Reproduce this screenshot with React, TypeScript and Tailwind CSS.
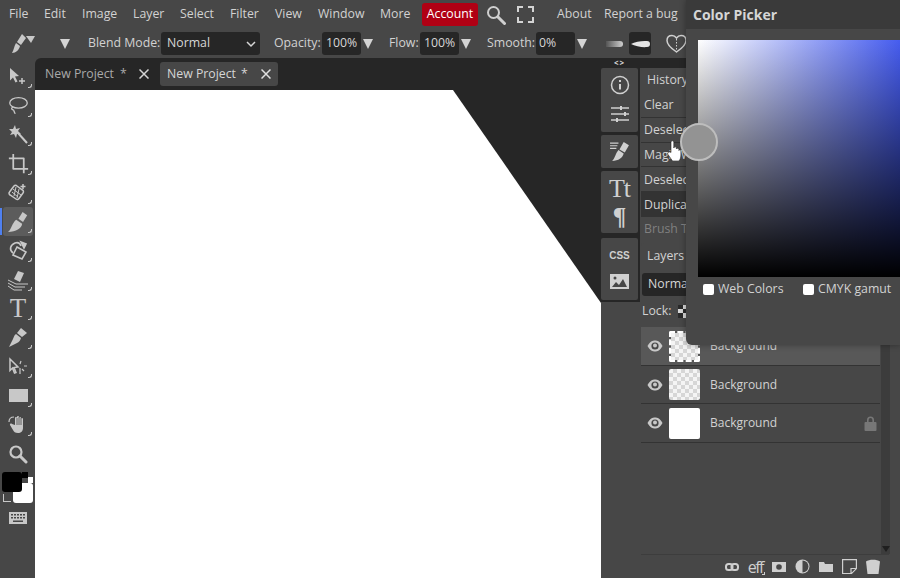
import type { ReactNode } from "react"

const menuLeft = [
  { label: "File", cls: "w-[35px]" },
  { label: "Edit", cls: "w-[38px]" },
  { label: "Image", cls: "w-[51px]" },
  { label: "Layer", cls: "w-[47px]" },
  { label: "Select", cls: "w-[50px]" },
  { label: "Filter", cls: "w-[45px]" },
  { label: "View", cls: "w-[43px]" },
  { label: "Window", cls: "w-[62px]" },
  { label: "More", cls: "w-[42px]" },
]

const historyRows = [
  { label: "Clear", cls: "bg-[#474747] text-[#d2d2d2]" },
  { label: "Deselect", cls: "bg-[#474747] text-[#d2d2d2]" },
  { label: "Magic Wand", cls: "bg-[#474747] text-[#d2d2d2]" },
  { label: "Deselect", cls: "bg-[#474747] text-[#d2d2d2]" },
  { label: "Duplicate", cls: "bg-[#333333] text-[#d2d2d2]" },
  { label: "Brush Tool", cls: "bg-[#474747] text-[#808080]" },
]

function Glyph({ size = 22, children }: { size?: number; children: ReactNode }) {
  return (
    <svg width={size} height={size} viewBox="0 0 24 24" fill="none" stroke="#c8c8c8" strokeWidth="2" strokeLinecap="round" strokeLinejoin="round">
      {children}
    </svg>
  )
}

function BrushIcon({ size = 22 }: { size?: number }) {
  return (
    <svg width={size} height={size} viewBox="0 0 24 24" fill="#c8c8c8">
      <path d="M17 1l5 3.500-4.500 7.500-5-3.500z" />
      <path d="M10 9.500l6.500 4.500C16 19 10 23 1 23c4-3 4.500-10 9-13.500z" />
    </svg>
  )
}

function Checker({ className }: { className: string }) {
  return (
    <div
      className={`${className} bg-[#f4f4f4] bg-[linear-gradient(45deg,#d6d6d6_25%,transparent_25%,transparent_75%,#d6d6d6_75%),linear-gradient(45deg,#d6d6d6_25%,transparent_25%,transparent_75%,#d6d6d6_75%)] bg-[length:8px_8px] bg-[position:0_0,4px_4px]`}
    />
  )
}

function ToolSlot({ active, corner = true, children }: { active?: boolean; corner?: boolean; children: ReactNode }) {
  return (
    <div className={`relative flex h-[29px] w-[30px] shrink-0 items-center justify-center rounded-[3px] ${active ? "bg-[#5c5c5c]" : ""}`}>
      {active && <span className="absolute -left-[3px] top-[1px] h-[27px] w-[2px] bg-[#4f80f0]" />}
      {children}
      {corner && <span className="absolute bottom-[3px] right-[1px] h-[4px] w-[4px] rounded-br-[3px] border-b border-r border-[#c8c8c8]" />}
    </div>
  )
}

function Triangle() {
  return <span className="block h-0 w-0 border-x-[5px] border-t-[10px] border-x-transparent border-t-[#d4d4d4]" />
}

function NumField({ value, cls }: { value: string; cls: string }) {
  return <div className={`flex h-[23px] w-[39px] items-center rounded-[3px] bg-[#262626] text-[#d6d6d6] ${cls}`}>{value}</div>
}

function LayerRow({ selected, lock, white, h }: { selected?: boolean; lock?: boolean; white?: boolean; h: string }) {
  return (
    <div className={`flex w-[239px] items-center border-b border-[#333333] ${h} ${selected ? "bg-[#585858]" : "bg-[#474747]"}`}>
      <div className="flex w-[28px] justify-center">
        <svg width="16" height="12" viewBox="0 0 16 12">
          <path d="M0.500 6C3 1.500 5.500 0.500 8 0.500S13 1.500 15.500 6C13 10.500 10.500 11.500 8 11.500S3 10.500 0.500 6z" fill="#c8c8c8" />
          <circle cx="8" cy="6" r="3.600" fill="#474747" />
          <circle cx="8" cy="5.500" r="2" fill="#c8c8c8" />
        </svg>
      </div>
      {white ? (
        <div className="h-[31px] w-[31px] rounded-[2px] bg-white" />
      ) : selected ? (
        <div className="rounded-[2px] border-2 border-dashed border-white">
          <Checker className="h-[27px] w-[27px]" />
        </div>
      ) : (
        <Checker className="h-[31px] w-[31px] rounded-[2px]" />
      )}
      <span className="ml-[10px] text-[12px] text-[#d2d2d2]">Background</span>
      {lock && (
        <svg className="ml-auto mr-[3px]" width="13" height="15" viewBox="0 0 13 15" fill="#777777">
          <path d="M3 6V4a3.500 3.500 0 017 0v2H8.400V4a1.900 1.900 0 00-3.800 0v2z" />
          <rect x="0.500" y="6" width="12" height="9" rx="1" />
        </svg>
      )}
    </div>
  )
}

export default function App() {
  return (
    <div className="relative flex h-[578px] w-[900px] flex-col overflow-hidden whitespace-nowrap bg-[#474747] font-['Open_Sans',sans-serif] text-[12.3px] text-[#d2d2d2]">
      {/* menu */}
      <div className="flex h-[29px] shrink-0 items-center pl-[9px]">
        {menuLeft.map((item) => (
          <span key={item.label} className={item.cls}>{item.label}</span>
        ))}
        <span className="flex h-[23px] w-[56px] items-center justify-center rounded-[3px] bg-[#b00014] text-white">Account</span>
        <svg className="ml-[8px]" width="20" height="20" viewBox="0 0 20 20" fill="none" stroke="#cfcfcf">
          <circle cx="7.500" cy="7.500" r="5.500" strokeWidth="2" />
          <path d="M12 12l6.500 6.500" strokeWidth="3" strokeLinecap="round" />
        </svg>
        <svg className="ml-[11px]" width="17" height="17" viewBox="0 0 17 17" fill="none" stroke="#d4d4d4" strokeWidth="2">
          <path d="M1 6V1h5M11 1h5v5M16 11v5h-5M6 16H1v-5" />
        </svg>
        <span className="ml-[23px] w-[47px]">About</span>
        <span>Report a bug</span>
      </div>

      {/* options */}
      <div className="flex h-[29px] shrink-0 items-center pl-[12px]">
        <svg width="25" height="21" viewBox="0 0 25 21" fill="#c8c8c8">
          <path d="M10 1l4 4-5 7-4-3z" />
          <path d="M4 10l4 3c-1 4-4 7-8 7 2-3 2-7 4-10z" />
          <path d="M14 3h9l-4 7z" />
        </svg>
        <span className="ml-[23px] mr-[18px] flex"><Triangle /></span>
        <span className="w-[73px]">Blend Mode:</span>
        <div className="flex h-[23px] w-[99px] items-center justify-between rounded-[3px] bg-[#262626] pl-[6px] pr-[3px] text-[#d6d6d6]">
          Normal
          <svg width="12" height="12" viewBox="0 0 12 12" fill="none" stroke="#d6d6d6" strokeWidth="1.500"><path d="M2 4l4 4 4-4" /></svg>
        </div>
        <span className="ml-[14px] w-[48px]">Opacity:</span>
        <NumField value="100%" cls="pl-[4px]" />
        <span className="ml-[2px] mr-[16px] flex"><Triangle /></span>
        <span className="w-[31px]">Flow:</span>
        <NumField value="100%" cls="pl-[4px]" />
        <span className="ml-[2px] mr-[16px] flex"><Triangle /></span>
        <span className="w-[49px]">Smooth:</span>
        <NumField value="0%" cls="pl-[3px]" />
        <span className="ml-[2px] flex"><Triangle /></span>
        <div className="ml-[19px] h-[6px] w-[17px] rounded-r-full bg-[linear-gradient(to_right,#555,#d0d0d0)]" />
        <div className="ml-[6px] flex h-[23px] w-[22px] items-center justify-center rounded-[3px] bg-[#262626]">
          <svg width="20" height="8" viewBox="0 0 20 8" fill="#e4e4e4"><path d="M1 4C5 1.500 13 0.500 17 1a3 3 0 010 6C13 7.500 5 6.500 1 4z" /></svg>
        </div>
        <svg className="ml-[15px]" width="21" height="20" viewBox="0 0 21 20" fill="none" stroke="#d0d0d0" strokeWidth="1.500">
          <path d="M10.500 18C6 15 1 11 1 6.500 1 3 3.500 1.500 6 1.500c2 0 3.500 1.200 4.500 2.500C11.500 2.700 13 1.500 15 1.500c2.500 0 5 1.500 5 5C20 11 15 15 10.500 18z" />
          <path d="M10.500 5v11" strokeWidth="1" strokeDasharray="1.500 1.500" />
        </svg>
      </div>

      {/* work area */}
      <div className="flex min-h-0 flex-1">
        {/* tools */}
        <div className="flex w-[35px] shrink-0 flex-col items-start pt-[4px]">
          <div className="ml-[3px] flex flex-col">
            <ToolSlot>
              <svg width="20" height="20" viewBox="0 0 20 20" fill="#c8c8c8">
                <path d="M2 1l9 8-4 .5 2.500 5-2 1-2.500-5-3 3z" />
                <path d="M14 11v6M11 14h6" stroke="#c8c8c8" strokeWidth="1.500" />
              </svg>
            </ToolSlot>
            <ToolSlot>
              <Glyph size={21}>
                <ellipse cx="12" cy="9" rx="10" ry="6" strokeWidth="1.500" />
                <path d="M5 14c-2 2 0 3 1 3s1 3 2 4" strokeWidth="1.500" />
              </Glyph>
            </ToolSlot>
            <ToolSlot>
              <svg width="21" height="21" viewBox="0 0 21 21" fill="#c8c8c8">
                <path d="M7 1l1 4 4-1-2 3 3 3-4 0-1 4-2-4-4 1 2-3-3-3 4 0z" />
                <path d="M10 9l9 10" stroke="#c8c8c8" strokeWidth="2" />
              </svg>
            </ToolSlot>
            <ToolSlot>
              <Glyph size={21}>
                <path d="M6 1v17h17M1 6h17v17" strokeLinecap="butt" />
              </Glyph>
            </ToolSlot>
            <ToolSlot>
              <svg width="21" height="21" viewBox="0 0 21 21" fill="none" stroke="#c8c8c8" strokeWidth="1.500">
                <path d="M6 4L1.500 10a2 2 0 00.500 3l6 4a2 2 0 003-.500L15 11a2 2 0 00-.500-3L9 4a2 2 0 00-3 0z" />
                <path d="M5 7l8 6M4 10l6 5M8 5l-2 9M11 7l-2 9" strokeWidth="1" />
                <path d="M15 2v5M12.500 4.500h5" />
              </svg>
            </ToolSlot>
            <ToolSlot active>
              <BrushIcon size={22} />
            </ToolSlot>
            <ToolSlot>
              <svg width="21" height="21" viewBox="0 0 21 21" fill="none" stroke="#c8c8c8" strokeWidth="1.600">
                <path d="M9 7l9 5-4 7-9-4z" />
                <path d="M5 13C1 10 2 5 7 3c3-1 5 0 6 3" />
                <path d="M13 2l5 2-2 4z" fill="#c8c8c8" />
              </svg>
            </ToolSlot>
            <ToolSlot>
              <svg width="22" height="22" viewBox="0 0 22 22" fill="#c8c8c8">
                <path d="M11 2l6 2-4 9-6-3z" />
                <path d="M1 11l8 4h12M1 14l7 4h10M1 17l6 4h8" stroke="#c8c8c8" strokeWidth="1" fill="none" />
              </svg>
            </ToolSlot>
            <ToolSlot>
              <span className="font-['Liberation_Serif',serif] text-[27px] leading-none text-[#c8c8c8]">T</span>
            </ToolSlot>
            <ToolSlot>
              <svg width="20" height="21" viewBox="0 0 20 21" fill="#c8c8c8">
                <path d="M13 1l6 5-5 4-5-4z" />
                <path d="M8 7l5 4c-1 3-2 4-4 5l-8 4 4-8c1-2 1-4 3-5z" />
              </svg>
            </ToolSlot>
            <ToolSlot>
              <svg width="20" height="20" viewBox="0 0 20 20" fill="none" stroke="#c8c8c8" strokeWidth="1.500">
                <path d="M2 2l8 8-4 .5 2 5-1.500.5-2-5-2.500 2.500z" />
                <path d="M13 4l-1 3M16 9h3M14 12l2 2M12 11v6" strokeWidth="1.200" />
              </svg>
            </ToolSlot>
            <ToolSlot>
              <div className="h-[13px] w-[19px] bg-[#c8c8c8]" />
            </ToolSlot>
            <ToolSlot>
              <svg width="21" height="21" viewBox="0 0 21 21" fill="#c8c8c8">
                <path d="M7 11V4a1 1 0 012 0V3a1 1 0 012 0v1a1 1 0 012 0v1a1 1 0 012 0v9c0 3-2 5-5 5s-4-1-5-3l-3-5c-.500-1 1-2 2-1z" />
                <path d="M9 4v7M11 3v8M13 4v7" fill="none" stroke="#474747" strokeWidth="0.800" />
                <path d="M1 8c0-3 2-5 5-5" fill="none" stroke="#c8c8c8" strokeWidth="1.200" />
              </svg>
            </ToolSlot>
            <ToolSlot corner={false}>
              <svg width="20" height="20" viewBox="0 0 20 20" fill="none" stroke="#c8c8c8">
                <circle cx="8" cy="8" r="5.500" strokeWidth="2.200" />
                <path d="M12 12l6 6" strokeWidth="3" strokeLinecap="round" />
              </svg>
            </ToolSlot>
          </div>
          <div className="relative ml-[2px] mt-[4px] h-[36px] w-[31px] shrink-0">
            <div className="absolute left-[11px] top-[11px] h-[20px] w-[20px] rounded-[3px] bg-white" />
            <div className="absolute left-0 top-0 h-[20px] w-[20px] rounded-[3px] bg-black" />
            <div className="absolute left-[20px] top-0 h-[6px] w-[6px] bg-black" />
            <div className="absolute left-[26px] top-[5px] h-[6px] w-[5px] bg-white" />
            <span className="absolute left-[1px] top-[22px] h-[8px] w-[8px] border-b border-l border-[#c8c8c8]" />
          </div>
          <svg className="ml-[9px] mt-[4px]" width="18" height="12" viewBox="0 0 18 12" fill="#c8c8c8">
            <path fillRule="evenodd" d="M0 0h18v12H0zM2 2v1.500h2V2zm3 0v1.500h2V2zm3 0v1.500h2V2zm3 0v1.500h2V2zm3 0v1.500h2V2zM2 5v1.500h2V5zm3 0v1.500h2V5zm3 0v1.500h2V5zm3 0v1.500h2V5zm3 0v1.500h2V5zM4 8.500V10h10V8.500z" />
          </svg>
        </div>

        {/* canvas */}
        <div className="flex w-[566px] shrink-0 flex-col rounded-tl-[6px] bg-[#262626]">
          <div className="flex h-[32px] shrink-0 items-center pl-[10px]">
            <div className="flex h-[24px] w-[115px] items-center text-[#a9a9a9]">
              <span className="w-[75px]">New Project</span>
              <span>*</span>
              <svg className="ml-[12px]" width="10" height="10" viewBox="0 0 10 10" stroke="#d4d4d4" strokeWidth="1.500"><path d="M0.500 0.500l9 9M9.500 0.500l-9 9" /></svg>
            </div>
            <div className="flex h-[24px] w-[118px] items-center rounded-[3px] bg-[#474747] pl-[7px] text-[#d6d6d6]">
              <span className="w-[74px]">New Project</span>
              <span>*</span>
              <svg className="ml-[13px]" width="10" height="10" viewBox="0 0 10 10" stroke="#e0e0e0" strokeWidth="1.500"><path d="M0.500 0.500l9 9M9.500 0.500l-9 9" /></svg>
            </div>
          </div>
          <div className="min-h-0 flex-1 bg-white [clip-path:polygon(0_0,418px_0,566px_213px,566px_100%,0_100%)]" />
        </div>

        {/* right side */}
        <div className="flex min-w-0 flex-1 flex-col">
          <div className="flex h-[10px] shrink-0 items-center bg-[#262626] pl-[13px] text-[8px] font-bold leading-none tracking-[1px] text-[#d6d6d6]">&lt;&gt;</div>
          <div className="flex min-h-0 flex-1">
            {/* dock */}
            <div className="flex w-[39px] shrink-0 flex-col">
              <div className="flex h-[234px] flex-col bg-[#262626] pr-[2px]">
                <div className="flex h-[64px] flex-col items-center gap-[11px] rounded-[2px] bg-[#474747] pt-[7px]">
                  <svg width="20" height="20" viewBox="0 0 20 20" fill="none" stroke="#d0d0d0" strokeWidth="1.500">
                    <circle cx="10" cy="10" r="8.500" />
                    <path d="M10 9v5.500M10 5v2" strokeWidth="2" />
                  </svg>
                  <svg width="20" height="16" viewBox="0 0 20 16" stroke="#d0d0d0" strokeWidth="1.500">
                    <path d="M1 2h18M1 8h18M1 14h18" />
                    <path d="M11 0v4M15 6v4M7 12v4" strokeWidth="2" />
                  </svg>
                </div>
                <div className="mt-[3px] flex h-[33px] items-center justify-center rounded-[2px] bg-[#474747]">
                  <svg width="21" height="21" viewBox="0 0 20 20" fill="#d0d0d0">
                    <path d="M14 1l5 3-4 7-5-3z" />
                    <path d="M9 8.500l5 3.500c-1 4-5 7-11 7 3-3 3-7 6-10.500z" />
                    <path d="M1 2h8M1 4.500h7M1 7h6" stroke="#d0d0d0" strokeWidth="1" />
                  </svg>
                </div>
                <div className="mt-[3px] flex h-[62px] flex-col items-center justify-center rounded-[2px] bg-[#474747] font-['Liberation_Serif',serif] leading-none text-[#d0d0d0]">
                  <span className="text-[26px] tracking-[-1px]">Tt</span>
                  <span className="mt-[2px] text-[25px] font-bold">¶</span>
                </div>
                <div className="mt-[5px] flex h-[62px] flex-col items-center justify-center gap-[13px] rounded-[2px] bg-[#474747] pt-[2px]">
                  <span className="font-['Liberation_Sans',sans-serif] text-[10px] font-bold leading-none text-[#d0d0d0]">CSS</span>
                  <svg width="19" height="15" viewBox="0 0 19 15">
                    <rect width="19" height="15" fill="#d0d0d0" />
                    <path d="M2 13l4-5 3 3 4-6 4 8z" fill="#474747" />
                    <circle cx="5" cy="4" r="1.500" fill="#474747" />
                  </svg>
                </div>
              </div>
            </div>

            {/* panels */}
            <div className="flex min-w-0 flex-1 flex-col pl-px">
              <div className="flex h-[24px] shrink-0 items-center rounded-t-[3px] bg-[#474747] pl-[6px]">History</div>
              <div className="mt-px flex h-[148px] shrink-0 flex-col gap-px bg-[#333333]">
                {historyRows.map((row, i) => (
                  <div key={i} className={`flex h-[24px] items-center pl-[3px] pt-px ${row.cls}`}>{row.label}</div>
                ))}
              </div>
              <div className="mt-[2px] flex h-[26px] shrink-0 items-center rounded-t-[3px] bg-[#474747] pl-[6px]">Layers</div>
              <div className="ml-px mt-[4px] flex h-[23px] w-[100px] shrink-0 items-center rounded-[3px] bg-[#262626] pl-[6px] text-[#d6d6d6]">Normal</div>
              <div className="flex h-[31px] shrink-0 items-center gap-[7px] pl-[1px]">
                Lock:
                <svg width="10" height="13" viewBox="0 0 10 13">
                  <rect width="10" height="13" fill="#d8d8d8" />
                  <path d="M0 0h5v4H0zM5 4h5v4H5zM0 8h5v5H0z" fill="#2a2a2a" />
                </svg>
              </div>
              <div className="flex min-h-0 flex-1">
                <div className="flex w-[239px] shrink-0 flex-col">
                  <LayerRow selected h="h-[39px]" />
                  <LayerRow h="h-[38px]" />
                  <LayerRow white lock h="h-[39px]" />
                </div>
                <div className="relative mb-[24px] ml-px w-[9px] shrink-0 bg-[#3c3c3c]">
                  <span className="absolute bottom-[2px] left-[1px] h-0 w-0 border-x-[4px] border-t-[6px] border-x-transparent border-t-[#1f1f1f]" />
                </div>
              </div>
              <div className="absolute bottom-0 left-[641px] flex h-[24px] w-[248px] items-center justify-end gap-[9px] border-t border-[#3d3d3d] pr-[9px]">
                <svg width="14" height="8" viewBox="0 0 14 8" fill="none" stroke="#cfcfcf" strokeWidth="2"><rect x="1" y="1" width="6.500" height="6" rx="2.500" /><rect x="6.500" y="1" width="6.500" height="6" rx="2.500" /></svg>
                <span className="relative text-[16px] leading-none tracking-[-1.500px] text-[#cfcfcf]">
                  eff
                  <span className="absolute -right-[2px] bottom-0 h-[3px] w-[3px] border-b border-r border-[#cfcfcf]" />
                </span>
                <svg width="14" height="10" viewBox="0 0 14 10"><rect width="14" height="10" fill="#cfcfcf" /><circle cx="7" cy="5" r="2.800" fill="#474747" /></svg>
                <svg width="15" height="15" viewBox="0 0 15 15"><circle cx="7.500" cy="7.500" r="7" fill="#cfcfcf" /><path d="M7.500 1.500a6 6 0 010 12z" fill="#474747" /></svg>
                <svg width="14" height="11" viewBox="0 0 14 11" fill="#cfcfcf"><path d="M0 1h5l1 2h8v8H0z" /></svg>
                <svg width="15" height="15" viewBox="0 0 15 15" fill="none" stroke="#cfcfcf" strokeWidth="1.200"><path d="M.6 .6h13.800v9l-5 5H.6zM14 9.500H9v5" /></svg>
                <svg width="14" height="15" viewBox="0 0 14 15" fill="#cfcfcf"><path d="M0 2.500C3 0 11 0 14 2.500L12.500 15h-11z" /></svg>
              </div>
            </div>
          </div>
        </div>
      </div>

      {/* color picker */}
      <div className="absolute right-0 top-0 flex h-[345px] w-[214px] flex-col overflow-hidden rounded-bl-[6px] bg-[#474747] shadow-[0_0_6px_rgba(0,0,0,0.35)]">
        <div className="flex h-[29px] shrink-0 items-center bg-[#3a3a3a] pb-px pl-[7px] text-[14px] font-bold text-[#d6d6d6]">Color Picker</div>
        <div className="ml-[12px] mt-[11px] h-[237px] w-[215px] shrink-0 bg-[linear-gradient(to_top,#000,transparent),linear-gradient(to_right,#fff,#3a52ee)]" />
        <div className="ml-[17px] flex h-[24px] items-center">
          <span className="h-[11px] w-[11px] rounded-[2px] bg-white" />
          <span className="ml-[4px] w-[85px]">Web Colors</span>
          <span className="h-[11px] w-[11px] rounded-[2px] bg-white" />
          <span className="ml-[4px]">CMYK gamut</span>
        </div>
      </div>

      {/* picker handle and pointer */}
      <div className="absolute left-[680px] top-[123px] h-[38px] w-[38px] rounded-full border-2 border-[#bdbdbd] bg-[#939393]" />
      <svg className="absolute left-[667px] top-[140px]" width="14" height="21" viewBox="0 0 14 21" fill="#ffffff" stroke="#222222" strokeWidth="0.600">
        <path d="M4 11V2.200a1.400 1.400 0 012.800 0V8a1.300 1.300 0 012.600.3V9a1.300 1.300 0 012.500.3v1.200a1 1 0 012 .3V15c0 3-1 5-2 6H5.500L1 14.500c-1-1.500 1-3.500 3-2z" />
      </svg>
    </div>
  )
}
